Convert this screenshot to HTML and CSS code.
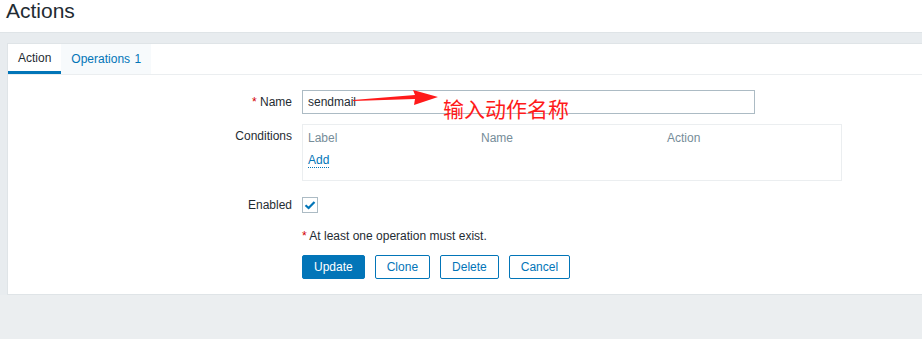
FILE: index.html
```html
<!DOCTYPE html>
<html>
<head>
  <meta charset="UTF-8">
  <title>Actions</title>
  <link rel="stylesheet" href="styles.css">
</head>
<body>
  <div class="header">
    <h1>Actions</h1>
  </div>
  <div class="wrapper">
    <div class="panel">
      <ul class="tabs">
        <li class="tab active">Action</li>
        <li class="tab">Operations <span class="count">1</span></li>
      </ul>
      <div class="form">
        <div class="row row-name">
          <label class="label"><span class="req">*</span> Name</label>
          <div class="field">
            <input type="text" class="text-input" value="sendmail">
          </div>
        </div>
        <div class="row row-cond">
          <label class="label label-top">Conditions</label>
          <div class="field">
            <div class="cond-box">
              <div class="cond-head">
                <span class="col-label">Label</span>
                <span class="col-name">Name</span>
                <span class="col-action">Action</span>
              </div>
              <a class="link-add">Add</a>
            </div>
          </div>
        </div>
        <div class="row row-enabled">
          <label class="label">Enabled</label>
          <div class="field">
            <span class="checkbox">
              <svg width="12" height="10" viewBox="0 0 12 10"><path d="M1.5 5.2 L4.6 8 L10.5 2" fill="none" stroke="#0275b8" stroke-width="2.2"/></svg>
            </span>
          </div>
        </div>
        <div class="row row-msg">
          <div class="label"></div>
          <div class="field"><span class="req">*</span> At least one operation must exist.</div>
        </div>
        <div class="row row-buttons">
          <div class="label"></div>
          <div class="field buttons">
            <button class="btn btn-main">Update</button>
            <button class="btn">Clone</button>
            <button class="btn">Delete</button>
            <button class="btn">Cancel</button>
          </div>
        </div>
      </div>
    </div>
  </div>

  <!-- screenshot annotation -->
  <svg class="arrow" width="100" height="24" viewBox="0 0 100 24">
    <polygon points="2,11 64,6 62,1 87,8 63,16 64,10 2,12" fill="#ff1a1a"/>
  </svg>
  <div class="note">输入动作名称</div>
</body>
</html>
```

FILE: styles.css
```css
* {
  box-sizing: border-box;
}
body {
  margin: 0;
  font-family: Arial, "Liberation Sans", sans-serif;
  font-size: 12px;
  color: #1f2c33;
  background-color: #ebeef0;
  height: 339px;
  overflow: hidden;
}
.header {
  background-color: #fff;
  height: 33px;
  border-bottom: 1px solid #dfe4e7;
  padding-left: 6px;
}
h1 {
  margin: 0;
  font-size: 21px;
  font-weight: normal;
  line-height: 22px;
}
.wrapper {
  padding: 10px 0 0 7px;
  background-color: #e8ecef;
}
.panel {
  background-color: #fff;
  border: 1px solid #dfe4e7;
  border-right: none;
}
.tabs {
  display: flex;
  margin: 0;
  padding: 0;
  list-style: none;
  border-bottom: 1px solid #ebeef0;
}
.tab {
  height: 30px;
  line-height: 29px;
  padding: 1px 10px 0;
  color: #0275b8;
  background-color: #f7fafc;
}
.tab.active {
  color: #1f2c33;
  background-color: #fff;
  border-bottom: 3px solid #0275b8;
  line-height: 27px;
}
.count {
  margin-left: 1px;
}
.form {
  padding: 15px 0 15px;
}
.row {
  display: flex;
  align-items: center;
}
.label {
  width: 284px;
  margin-right: 10px;
  text-align: right;
}
.label-top {
  align-self: flex-start;
  padding-top: 5px;
}
.req {
  color: #d40000;
}
.row-name {
  margin-bottom: 10px;
}
.text-input {
  width: 453px;
  height: 24px;
  border: 1px solid #acbbc4;
  padding: 0 5px;
  font-family: inherit;
  font-size: 12px;
  color: #1f2c33;
  outline: none;
}
.cond-box {
  width: 540px;
  height: 57px;
  border: 1px solid #ebeef0;
  padding: 6px 5px 0;
}
.cond-head {
  display: flex;
  color: #768d99;
  line-height: 14px;
}
.col-label {
  width: 173px;
}
.col-name {
  width: 186px;
}
.link-add {
  display: inline-block;
  margin-top: 8px;
  color: #0275b8;
  line-height: 14px;
  border-bottom: 1px dotted #0275b8;
}
.row-enabled {
  margin-top: 16px;
  height: 16px;
}
.checkbox {
  display: flex;
  align-items: center;
  justify-content: center;
  width: 16px;
  height: 16px;
  border: 1px solid #acbbc4;
}
.row-msg {
  margin-top: 16px;
  line-height: 14px;
}
.row-buttons {
  margin-top: 12px;
}
.buttons {
  display: flex;
  gap: 10px;
}
.btn {
  height: 24px;
  padding: 0 11px;
  border: 1px solid #0275b8;
  border-radius: 2px;
  background-color: #fff;
  color: #0275b8;
  font-family: inherit;
  font-size: 12px;
}
.btn-main {
  background-color: #0275b8;
  color: #fff;
}
.arrow {
  position: absolute;
  left: 351px;
  top: 89px;
}
.note {
  position: absolute;
  left: 443px;
  top: 94px;
  font-family: "Noto Sans CJK SC", sans-serif;
  font-size: 21px;
  line-height: 28px;
  color: #ff1a1a;
}
```
